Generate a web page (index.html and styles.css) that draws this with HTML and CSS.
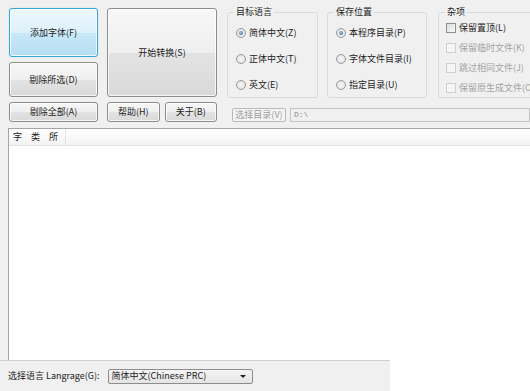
FILE: index.html
```html
<!DOCTYPE html>
<html lang="zh-CN">
<head>
<meta charset="utf-8">
<title>字体转换</title>
<link rel="stylesheet" href="styles.css">
</head>
<body>
<div class="win">
  <div class="top">
    <div class="btns">
      <div class="col1">
        <button class="btn primary h49">添加字体(F)</button>
        <button class="btn h35">剔除所选(D)</button>
        <button class="btn h20">剔除全部(A)</button>
      </div>
      <div class="col2">
        <button class="btn h89">开始转换(S)</button>
        <div class="pair">
          <button class="btn">帮助(H)</button>
          <button class="btn">关于(B)</button>
        </div>
      </div>
    </div>
    <div class="right">
      <div class="groups">
        <fieldset class="grp g1">
          <legend>目标语言</legend>
          <div class="opt"><span class="radio on"></span><span>简体中文(Z)</span></div>
          <div class="opt"><span class="radio"></span><span>正体中文(T)</span></div>
          <div class="opt"><span class="radio"></span><span>英文(E)</span></div>
        </fieldset>
        <fieldset class="grp g2">
          <legend>保存位置</legend>
          <div class="opt"><span class="radio on"></span><span>本程序目录(P)</span></div>
          <div class="opt"><span class="radio"></span><span>字体文件目录(I)</span></div>
          <div class="opt"><span class="radio"></span><span>指定目录(U)</span></div>
        </fieldset>
        <fieldset class="grp g3">
          <legend>杂项</legend>
          <div class="chk"><span class="cb"></span><span>保留置顶(L)</span></div>
          <div class="chk dis"><span class="cb"></span><span>保留临时文件(K)</span></div>
          <div class="chk dis"><span class="cb"></span><span>跳过相同文件(J)</span></div>
          <div class="chk dis"><span class="cb"></span><span>保留原生成文件(O)</span></div>
        </fieldset>
      </div>
      <div class="dir">
        <button class="btn off">选择目录(V)</button>
        <div class="field">D:\</div>
      </div>
    </div>
  </div>
  <div class="mid">
    <div class="list">
      <div class="lhead">
        <div class="hcell"><span>字</span><span>类</span><span>所</span></div>
      </div>
    </div>
  </div>
  <div class="bottom">
    <div class="bar">
      <span class="lbl">选择语言 Langrage(G):</span>
      <div class="combo"><span>简体中文(Chinese PRC)</span><span class="arrow"></span></div>
    </div>
    <div class="blank"></div>
  </div>
</div>
</body>
</html>
```

FILE: styles.css
```css
body {
  margin: 0;
  background: #ffffff;
  font-family: "Noto Sans CJK SC", "Noto Sans", sans-serif;
  font-size: 9px;
  line-height: 12px;
  color: #1c1c1c;
}

.win {
  width: 530px;
  height: 391px;
  display: flex;
  flex-direction: column;
  background: #f0f0f0;
  overflow: hidden;
}

.top {
  display: flex;
  height: 128px;
  flex-shrink: 0;
  box-sizing: border-box;
  padding-left: 9px;
  gap: 10px;
}

.btns {
  display: flex;
  gap: 9px;
  padding-top: 8px;
}

.col1 {
  display: flex;
  flex-direction: column;
  gap: 5px;
  width: 89px;
}

.col2 {
  display: flex;
  flex-direction: column;
  gap: 5px;
  width: 110px;
}

.h49 { height: 49px; }
.h35 { height: 35px; }
.h20 { height: 20px; }
.h89 { height: 89px; }

.pair {
  display: flex;
  gap: 5px;
  height: 20px;
}

.pair .btn { flex: 1; }

.btn {
  box-sizing: border-box;
  border: 1px solid #8d8d8d;
  border-radius: 3px;
  background: linear-gradient(#f7f7f7, #efefef 50%, #e3e3e3 51%, #d9d9d9);
  box-shadow: inset 0 0 0 1px rgba(255, 255, 255, 0.75);
  font: inherit;
  color: inherit;
  padding: 0;
  display: flex;
  align-items: center;
  justify-content: center;
  white-space: nowrap;
}

.btn.primary {
  border-color: #3aa6d6;
  background: linear-gradient(#edf8fd, #ddf1fb 50%, #c8e9f8 51%, #b4def3);
  box-shadow: inset 0 0 0 1px rgba(255, 255, 255, 0.8), 0 0 1px #7fd0ef;
}

.right {
  flex: 1;
  min-width: 0;
  padding-top: 6px;
  display: flex;
  flex-direction: column;
}

.groups {
  display: flex;
}

.grp {
  margin: 0;
  flex-shrink: 0;
  box-sizing: border-box;
  height: 92px;
  border: 1px solid #d5dde2;
  border-radius: 3px;
  padding: 2px 4px 0 6px;
  min-width: 0;
}

.grp legend {
  padding: 0 2px;
  line-height: 12px;
}

.g1 { width: 91px; }
.g2 { width: 100px; margin-left: 9px; }
.g3 { width: 100px; margin-left: 11px; padding-top: 0; }

.opt {
  height: 26px;
  display: flex;
  align-items: center;
  gap: 3px;
  white-space: nowrap;
}

.radio {
  width: 10px;
  height: 10px;
  margin-left: 2px;
  box-sizing: border-box;
  border-radius: 50%;
  border: 1px solid #9a9a9a;
  background: radial-gradient(#f6f6f6, #dedede);
  display: flex;
  align-items: center;
  justify-content: center;
  flex-shrink: 0;
}

.radio.on::after {
  content: "";
  width: 4px;
  height: 4px;
  border-radius: 50%;
  background: radial-gradient(circle at 40% 40%, #a8c8e8, #24528a);
}

.chk {
  height: 20px;
  display: flex;
  align-items: center;
  gap: 3px;
  white-space: nowrap;
}

.cb {
  width: 10px;
  height: 10px;
  margin-left: 1px;
  box-sizing: border-box;
  border: 1px solid #8e8f8f;
  background: linear-gradient(135deg, #dcdcdc, #f8f8f8);
  flex-shrink: 0;
}

.chk.dis { color: #a3a3a3; }
.chk.dis .cb {
  border-color: #cfcfcf;
  background: #f5f5f5;
}

.dir {
  display: flex;
  gap: 4px;
  margin-top: 10px;
  height: 14px;
  padding-left: 5px;
}

.btn.off {
  width: 54px;
  flex-shrink: 0;
  border-radius: 2px;
  border-color: #b9b9b9;
  color: #9c9c9c;
  background: #f4f4f4;
  box-shadow: none;
}

.field {
  flex: 1;
  box-sizing: border-box;
  border: 1px solid #c4c4c4;
  background: #f0f0f0;
  color: #8a8a8a;
  padding-left: 3px;
  line-height: 12px;
  font-family: "Liberation Mono", monospace;
  font-size: 8px;
}

.mid {
  flex: 1;
  display: flex;
  padding-left: 8px;
  min-height: 0;
}

.list {
  flex: 1;
  background: #ffffff;
  border-left: 1px solid #a5a5a5;
  border-top: 1px solid #a5a5a5;
}

.lhead {
  height: 17px;
  box-sizing: border-box;
  border-bottom: 1px solid #e3e3e3;
  background: linear-gradient(#ffffff, #f3f3f3);
  display: flex;
}

.hcell {
  width: 52px;
  display: flex;
  align-items: center;
  gap: 9px;
  padding-left: 4px;
  border-right: 1px solid #e3e3e3;
}

.bottom {
  height: 31px;
  flex-shrink: 0;
  display: flex;
}

.bar {
  width: 390px;
  box-sizing: border-box;
  border-top: 1px solid #cfcfcf;
  display: flex;
  align-items: center;
  padding-left: 8px;
  gap: 8px;
}

.lbl { white-space: nowrap; }

.combo {
  width: 145px;
  height: 15px;
  box-sizing: border-box;
  border: 1px solid #8d8d8d;
  border-radius: 2px;
  background: linear-gradient(#f4f4f4, #e4e4e4);
  display: flex;
  align-items: center;
  justify-content: space-between;
  padding: 0 6px 0 3px;
  white-space: nowrap;
}

.arrow {
  width: 0;
  height: 0;
  border-left: 3px solid transparent;
  border-right: 3px solid transparent;
  border-top: 3px solid #222222;
}

.blank {
  flex: 1;
  background: #ffffff;
}
```
